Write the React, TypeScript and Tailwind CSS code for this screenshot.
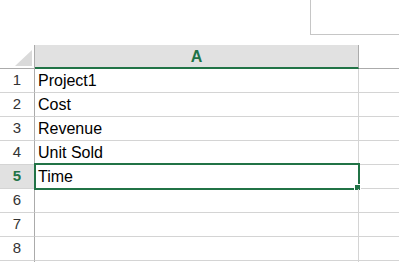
const rows = ['Project1', 'Cost', 'Revenue', 'Unit Sold', 'Time', '', '', '', '']

export default function App() {
  return (
    <div className="h-[262px] w-[399px] overflow-hidden bg-white font-['Liberation_Sans',Arial,sans-serif] text-black">
      {/* formula bar area */}
      <div className="flex h-[45px] justify-end">
        <div className="h-[35px] w-[89px] border-b border-l border-[#c6c6c6]" />
      </div>

      <div className="grid grid-cols-[35px_324px_1fr]">
        {/* header row */}
        <div className="relative h-[24px] border-b border-r border-[#ababab]">
          <svg className="absolute left-[15px] top-[5px]" width="17" height="16" viewBox="0 0 17 16">
            <polygon points="17,0 17,16 0,16" fill="#dadada" />
          </svg>
        </div>
        <div className="flex h-[24px] items-center justify-center border-b-2 border-r border-[#ababab] border-b-[#217346] bg-[#e1e1e1] pt-[1px] text-[16px] font-bold text-[#217346]">
          A
        </div>
        <div className="h-[24px] border-b border-[#ababab]">
          <div className="flex h-full w-[74px] items-center justify-end text-[16px] text-[#444]">B</div>
        </div>

        {rows.map((text, i) => {
          const selected = i === 4
          return (
            <div key={i} className="contents">
              <div
                className={
                  selected
                    ? 'flex h-[24px] items-center justify-center border-b border-r border-[#ababab] border-b-[#d4d4d4] bg-[#e1e1e1] text-[15px] font-bold text-[#217346]'
                    : 'flex h-[24px] items-center justify-center border-b border-r border-[#ababab] border-b-[#d4d4d4] text-[15px] text-[#333]'
                }
              >
                {i < 8 ? i + 1 : ''}
              </div>
              <div className="relative flex h-[24px] items-center border-b border-r border-[#d4d4d4] pl-[3px] text-[16px]">
                {text}
                {selected && (
                  <>
                    <div className="pointer-events-none absolute left-[-1px] top-[-2px] h-[27px] w-[326px] border-2 border-[#217346]" />
                    <div className="absolute left-[319px] top-[19px] h-[7px] w-[7px] border border-white bg-[#217346]" />
                  </>
                )}
              </div>
              <div className="h-[24px] border-b border-[#d4d4d4]" />
            </div>
          )
        })}
      </div>
    </div>
  )
}
